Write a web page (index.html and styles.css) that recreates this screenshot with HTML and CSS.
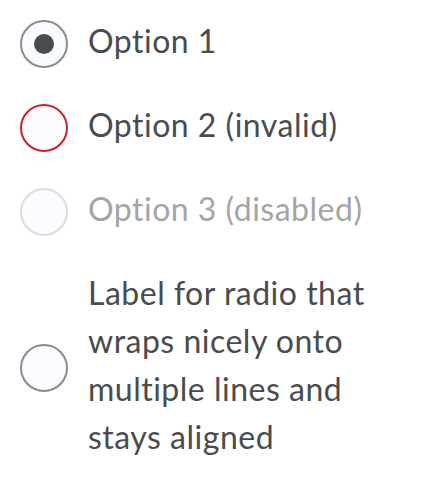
FILE: index.html
```html
<!DOCTYPE html>
<html lang="en">
<head>
<meta charset="utf-8">
<title>Radio group</title>
<link rel="stylesheet" href="styles.css">
</head>
<body>
<div class="group" role="radiogroup">
  <label class="item">
    <span class="radio checked"></span>
    <span class="text">Option 1</span>
  </label>
  <label class="item">
    <span class="radio invalid"></span>
    <span class="text">Option 2 (invalid)</span>
  </label>
  <label class="item disabled">
    <span class="radio"></span>
    <span class="text">Option 3 (disabled)</span>
  </label>
  <label class="item">
    <span class="radio"></span>
    <span class="text">Label for radio that wraps nicely onto multiple lines and stays aligned</span>
  </label>
</div>
</body>
</html>
```

FILE: styles.css
```css
html, body {
  margin: 0;
  background: #ffffff;
}
body {
  font-family: Lato, "Noto Sans", sans-serif;
  color: #494c4e;
}
.group {
  display: flex;
  flex-direction: column;
  gap: 30px;
  padding: 17px 20px 20px 20px;
}
.item {
  display: flex;
  align-items: center;
  gap: 20px;
}
.radio {
  flex: none;
  box-sizing: border-box;
  width: 48px;
  height: 48px;
  border-radius: 50%;
  border: 2px solid #868c8f;
  background: #f9fbff;
  display: flex;
  align-items: center;
  justify-content: center;
}
.radio.checked::after {
  content: "";
  width: 20px;
  height: 20px;
  border-radius: 50%;
  background: #494c4e;
}
.radio.invalid {
  border-color: #cd2026;
}
.text {
  font-size: 32px;
  line-height: 48px;
  letter-spacing: 0.5px;
  padding-bottom: 6px;
  max-width: 300px;
}
.disabled {
  opacity: 0.5;
}
.disabled .radio {
  border-color: #b9bcbe;
}
```
